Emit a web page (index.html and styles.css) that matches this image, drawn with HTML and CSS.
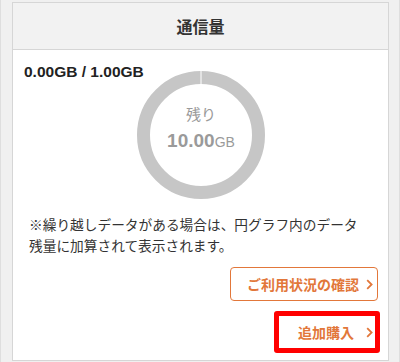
FILE: index.html
```html
<!DOCTYPE html>
<html lang="ja">
<head>
<meta charset="utf-8">
<link rel="stylesheet" href="styles.css">
</head>
<body>
<div class="frame">
  <section class="card">
    <header class="card-head">通信量</header>
    <div class="card-body">
      <div class="usage">
        <div class="usage-label">0.00GB / 1.00GB</div>
        <div class="donut">
          <svg class="donut-svg" width="128" height="128" viewBox="0 0 128 128">
            <circle cx="64" cy="64" r="57.5" fill="none" stroke="#c6c6c6" stroke-width="13"/>
            <line x1="64" y1="0" x2="64" y2="14" stroke="#ffffff" stroke-width="1"/>
          </svg>
          <div class="donut-text">
            <span class="donut-caption">残り</span>
            <span class="donut-value"><b>10.00</b><small>GB</small></span>
          </div>
        </div>
        <div></div>
      </div>
      <p class="note">※繰り越しデータがある場合は、円グラフ内のデータ<br>残量に加算されて表示されます。</p>
      <div class="actions">
        <a class="btn btn-outline">ご利用状況の確認<svg class="chev" width="7" height="11" viewBox="0 0 7 11"><polyline points="1.2,1.2 5.6,5.5 1.2,9.8" fill="none" stroke="#e2773a" stroke-width="1.8"/></svg></a>
        <a class="btn btn-link">追加購入<svg class="chev" width="7" height="11" viewBox="0 0 7 11"><polyline points="1.2,1.2 5.6,5.5 1.2,9.8" fill="none" stroke="#e2773a" stroke-width="1.8"/></svg></a>
      </div>
    </div>
  </section>
</div>
</body>
</html>
```

FILE: styles.css
```css
html, body {
  margin: 0;
  padding: 0;
}
body {
  background: #f0f0f0;
  font-family: "Liberation Sans", "Noto Sans CJK JP", sans-serif;
  color: #333;
  width: 400px;
  height: 362px;
  overflow: hidden;
}
.frame {
  box-sizing: border-box;
  width: 400px;
  height: 362px;
  border-left: 1px solid #dedede;
  border-right: 1px solid #dedede;
  padding: 2px 10px 0 11px;
}
.card {
  box-sizing: border-box;
  width: 377px;
  height: 359px;
  background: #fff;
  border: 1px solid #d6d6d6;
}
.card-head {
  height: 46px;
  background: #f2f2f2;
  border-bottom: 1px solid #d6d6d6;
  display: flex;
  align-items: center;
  justify-content: center;
  font-family: "Noto Sans CJK JP", sans-serif;
  font-weight: bold;
  font-size: 16px;
  color: #333;
}
.card-body {
  padding: 12px 10px 0 11px;
}
.usage {
  display: grid;
  grid-template-columns: minmax(0, 1fr) 128px minmax(0, 1fr);
  align-items: start;
}
.usage-label {
  font-size: 15.5px;
  font-weight: bold;
  line-height: 20px;
  color: #222;
  white-space: nowrap;
}
.donut {
  margin-top: 9px;
  width: 128px;
  height: 128px;
  display: grid;
}
.donut-svg {
  grid-area: 1 / 1;
  display: block;
}
.donut-text {
  grid-area: 1 / 1;
  display: flex;
  flex-direction: column;
  align-items: center;
  justify-content: center;
  padding-bottom: 12px;
  color: #9a9a9a;
}
.donut-caption {
  font-family: "Noto Sans CJK JP", sans-serif;
  font-size: 15px;
  line-height: 22px;
}
.donut-value {
  line-height: 26px;
  margin-top: 3px;
}
.donut-value b {
  font-size: 19px;
  font-weight: bold;
}
.donut-value small {
  font-size: 14px;
}
.note {
  margin: 15px 0 0 0;
  padding-left: 5px;
  font-family: "Noto Sans CJK JP", sans-serif;
  font-size: 13.7px;
  line-height: 21px;
  color: #333;
}
.actions {
  margin-top: 11px;
  display: flex;
  flex-direction: column;
  align-items: flex-end;
  gap: 10px;
}
.btn {
  box-sizing: border-box;
  display: flex;
  align-items: center;
  justify-content: flex-end;
  font-family: "Noto Sans CJK JP", sans-serif;
  font-weight: bold;
  font-size: 14px;
  color: #e2773a;
  text-decoration: none;
}
.btn-outline {
  width: 148px;
  height: 34px;
  border: 1.5px solid #e2773a;
  border-radius: 4px;
  padding-right: 4px;
  gap: 7px;
}
.btn-link {
  width: 106px;
  height: 42px;
  margin-right: -2px;
  border: 5px solid #ff0000;
  border-radius: 3px;
  padding-right: 2px;
  gap: 12px;
}
.chev {
  display: block;
}
```
